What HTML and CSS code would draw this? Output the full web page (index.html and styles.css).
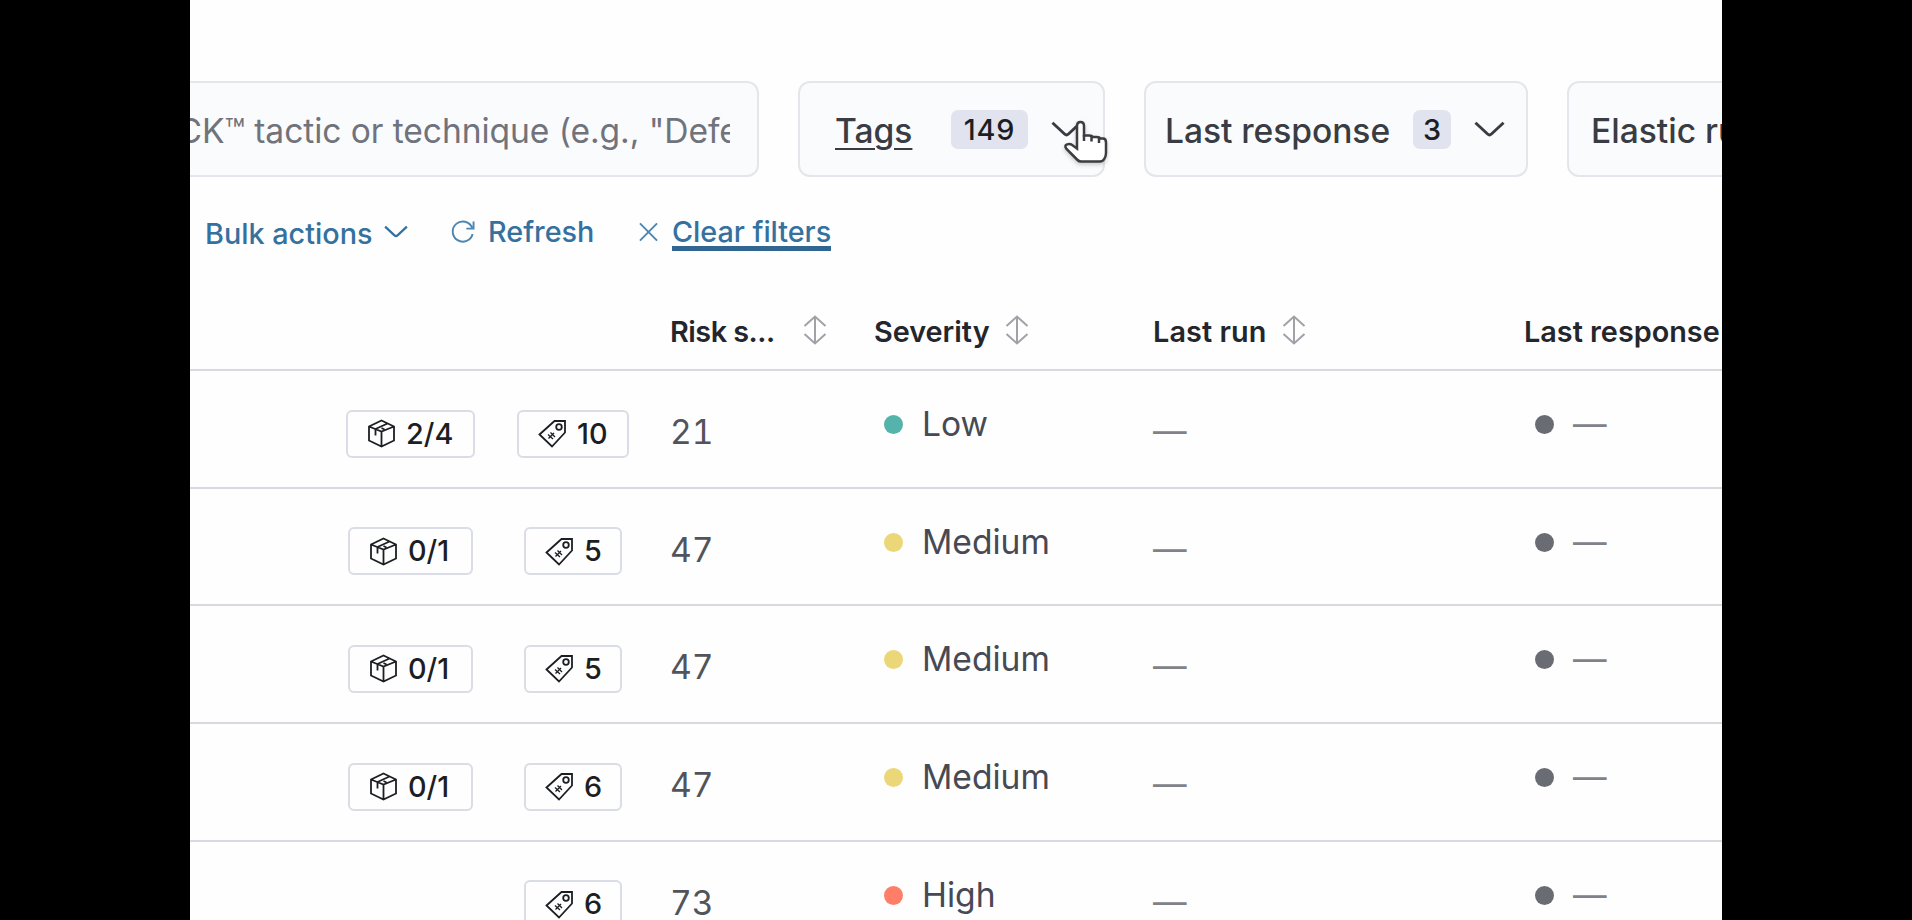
FILE: index.html
```
<!DOCTYPE html>
<html lang="en">
<head>
<meta charset="utf-8">
<title>Rules</title>
<link rel="stylesheet" href="styles.css">
</head>
<body>
<svg class="defs" width="0" height="0" aria-hidden="true">
  <symbol id="chevron" viewBox="0 0 32 16"><path d="M1.5 1.5 14 13.2q2 1.8 4 0L30.5 1.5"/></symbol>
  <symbol id="sort" viewBox="0 0 24 30"><path d="M12 2v26M1.5 11 12 1.5 22.500 11M1.500 19 12 28.500 22.500 19"/></symbol>
  <symbol id="pack" viewBox="0 0 29 29"><path d="M14.500 1.500 27 7.500v14L14.500 27.500 2 21.500v-14zM2 7.500l12.500 5L27 7.500M14.500 12.500v15M20.500 4.500 8.500 10v6.500M14.500 9l3 1.500"/></symbol>
  <symbol id="tag" viewBox="0 0 29 29"><path d="M1.500 15.500 16.500 2H27v11.500L14 27.500z"/><circle cx="21" cy="8" r="2.800"/><path stroke-width="1.300" d="M10 15.500l5 4.500M12.500 13.500l4.500 4.500M10.500 19.500l5.500-5.500"/></symbol>
</svg>
<main class="app">
  <div class="filters">
    <div class="search"><div class="search-clip"><span>CK™ tactic or technique (e.g., "Defe</span></div></div>
    <button class="filter filter-tags"><span class="flabel">Tags</span><span class="count">149</span><svg class="chev"><use href="#chevron"/></svg></button>
    <button class="filter filter-resp"><span class="flabel">Last response</span><span class="count">3</span><svg class="chev"><use href="#chevron"/></svg></button>
    <button class="filter filter-elastic"><span class="flabel">Elastic rules</span></button>
  </div>
  <div class="toolbar">
    <a class="bulk">Bulk actions</a><svg class="tchev"><use href="#chevron"/></svg>
    <svg class="ref" viewBox="0 0 25 24"><path d="M22 7.500A10.500 10.500 0 1 0 22.500 14M23.500 1v7.500H16"/></svg><a class="refresh">Refresh</a>
    <svg class="cross" viewBox="0 0 20 20"><path d="M1 1l18 18M19 1 1 19"/></svg><a class="clear">Clear filters</a>
  </div>
  <div class="row head">
    <span></span><span></span>
    <span class="th risk"><b>Risk s...</b><svg class="sort"><use href="#sort"/></svg></span>
    <span class="th sev"><b>Severity</b><svg class="sort"><use href="#sort"/></svg></span>
    <span class="th run"><b>Last run</b><svg class="sort"><use href="#sort"/></svg></span>
    <span class="th resp"><b>Last response</b></span>
  </div>
  <div class="row">
    <span class="cell"><span class="badge w-pack-l"><svg><use href="#pack"/></svg>2/4</span></span>
    <span class="cell"><span class="badge w-tag-l"><svg><use href="#tag"/></svg>10</span></span>
    <span class="num">21</span><span class="health"><i class="dot low"></i>Low</span><span class="dash">—</span><span class="health resp"><i class="dot"></i><em>—</em></span>
  </div>
  <div class="row">
    <span class="cell"><span class="badge w-pack"><svg><use href="#pack"/></svg>0/1</span></span>
    <span class="cell"><span class="badge w-tag"><svg><use href="#tag"/></svg>5</span></span>
    <span class="num">47</span><span class="health"><i class="dot medium"></i>Medium</span><span class="dash">—</span><span class="health resp"><i class="dot"></i><em>—</em></span>
  </div>
  <div class="row">
    <span class="cell"><span class="badge w-pack"><svg><use href="#pack"/></svg>0/1</span></span>
    <span class="cell"><span class="badge w-tag"><svg><use href="#tag"/></svg>5</span></span>
    <span class="num">47</span><span class="health"><i class="dot medium"></i>Medium</span><span class="dash">—</span><span class="health resp"><i class="dot"></i><em>—</em></span>
  </div>
  <div class="row">
    <span class="cell"><span class="badge w-pack"><svg><use href="#pack"/></svg>0/1</span></span>
    <span class="cell"><span class="badge w-tag"><svg><use href="#tag"/></svg>6</span></span>
    <span class="num">47</span><span class="health"><i class="dot medium"></i>Medium</span><span class="dash">—</span><span class="health resp"><i class="dot"></i><em>—</em></span>
  </div>
  <div class="row">
    <span class="cell"></span>
    <span class="cell"><span class="badge w-tag"><svg><use href="#tag"/></svg>6</span></span>
    <span class="num">73</span><span class="health"><i class="dot high"></i>High</span><span class="dash">—</span><span class="health resp"><i class="dot"></i><em>—</em></span>
  </div>
  <svg class="cursor" viewBox="0 0 46 46"><path d="M14 26V6q0-4 3.500-4T21 6v9.500h5q3 0 3.500 1.500h4q3 0 3.500 1.500h3q3 0 3 4V33q0 3-1.500 5.500Q40 41.500 37 41.500H18q-2 0-3.500-1.500L3.500 29Q1 25.500 4 24.500q2-1 4.500 0l5.500 4z"/><path d="M21 15v6M28.500 16.500v5M36 18v5"/></svg>
</main>
</body>
</html>
```
FILE: styles.css
```
* { box-sizing: border-box; }
html { overflow: hidden; }
body { margin: 0; background: #000; font-family: Inter, "Liberation Sans", sans-serif; overflow: hidden; }
svg { fill: none; stroke: currentColor; flex: none; display: block; }
.defs { position: absolute; }
.app { position: relative; width: 1532px; height: 920px; margin-left: 190px; background: #fefefe; overflow: hidden; }

.filters { display: flex; height: 177px; padding-top: 81px; }
.search, .filter { height: 96px; border: 2px solid #e5e6ec; border-radius: 12px; background: #fafbfd; flex: none; }
.search { width: 569px; border-left: 0; border-radius: 0 12px 12px 0; }
.search-clip { width: 540px; height: 92px; overflow: hidden; white-space: nowrap; font-size: 33.6px; line-height: 95px; letter-spacing: -0.07px; color: #70737b; }
.search-clip span { margin-left: -12.500px; }
.filter { display: flex; align-items: center; padding: 0; color: #3a3c43; font: 450 33.6px/44px Inter, sans-serif; }
.flabel { padding-top: 3px; white-space: nowrap; }
.filter-tags { width: 307px; margin-left: 39px; padding-left: 35px; }
.filter-tags .flabel { width: 116px; text-align: left; text-decoration: underline; text-decoration-thickness: 2.4px; text-underline-offset: 5px; }
.filter-resp { width: 384px; margin-left: 39px; padding-left: 19px; }
.filter-resp .flabel { width: 248px; text-align: left; letter-spacing: -0.05px; }
.filter-elastic { width: 300px; margin-left: 39px; padding-left: 22px; }
.count { width: 38px; height: 39px; border-radius: 7px; background: #e1e4ee; color: #1c1e23; font-size: 28.8px; font-weight: 550; line-height: 40px; text-align: center; }
.filter-tags .count { width: 77px; letter-spacing: 0.8px; }
.chev { width: 31px; height: 16px; margin-left: 23px; stroke-width: 3px; }

.toolbar { display: flex; height: 123px; padding-top: 32px; color: #35719f; font-size: 28.8px; font-weight: 500; line-height: 48px; white-space: nowrap; }
.bulk { width: 179px; margin-left: 15px; padding-top: 1px; }
.tchev { width: 24px; height: 13px; margin: 16px 43px 0 0; stroke-width: 3px; }
.ref { width: 24px; height: 24px; margin: 11px 13px 0 0; stroke-width: 2px; color: #4d86b0; }
.refresh { width: 151px; margin-top: -1px; }
.cross { width: 19px; height: 20px; margin: 13px 14px 0 0; stroke-width: 2px; color: #4d86b0; }
.clear { margin-top: -1px; height: 43px; border-bottom: 5px solid #30668f; letter-spacing: -0.05px; }

.row { display: grid; grid-template-columns: 300px 166px 217px 280px 372px 1fr; height: 117.700px; border-bottom: 2px solid #d8dae0; }
.head { height: 71.100px; }
.th { display: flex; color: #24262c; font-size: 28.8px; line-height: 34px; padding-top: 15px; white-space: nowrap; }
.th b { font-weight: 600; }
.sort { width: 24px; height: 30px; color: #a0a2a8; stroke-width: 2px; }
.risk { padding-left: 14px; } .risk b { width: 133px; letter-spacing: -0.5px; }
.sev { padding-left: 1px; } .sev b { width: 131px; }
.run b { width: 129px; letter-spacing: 0.1px; }
.th.resp { margin-left: -1px; }
.cell { display: flex; justify-content: center; padding-top: 38.500px; }
.cell:first-child { padding-left: 141px; }
.badge { display: flex; align-items: center; height: 48px; border: 2px solid #dadce6; border-radius: 6px; padding-left: 19px; gap: 10px; color: #1c1e23; font-size: 28.8px; font-weight: 500; line-height: 44px; white-space: nowrap; }
.badge svg { width: 29px; height: 29px; stroke-width: 1.800px; }
.w-pack-l { width: 129px; } .w-pack { width: 125px; }
.w-tag-l { width: 112px; } .w-tag { width: 98px; }
.num, .health, .dash { font-size: 33.6px; line-height: 44px; color: #52545c; }
.num { padding: 39px 0 0 14px; font-variant-numeric: tabular-nums; }
.health { display: flex; padding: 31px 0 0 11px; color: #474a54; }
.health.resp { padding-left: 10px; color: #808189; }
.health em { font-style: normal; }
.dash { padding-top: 38px; color: #808189; }
.dot { width: 19px; height: 19px; margin: 13px 19px 0 0; border-radius: 50%; background: #6a6c74; }
.low { background: #54b3ab; } .medium { background: #ebd778; } .high { background: #ff7e68; }
.cursor { position: absolute; left: 873px; top: 120px; width: 46px; height: 46px; fill: #fff; stroke: #3d3d41; stroke-width: 2.500px; filter: drop-shadow(0 2px 2px #0003); }
```
